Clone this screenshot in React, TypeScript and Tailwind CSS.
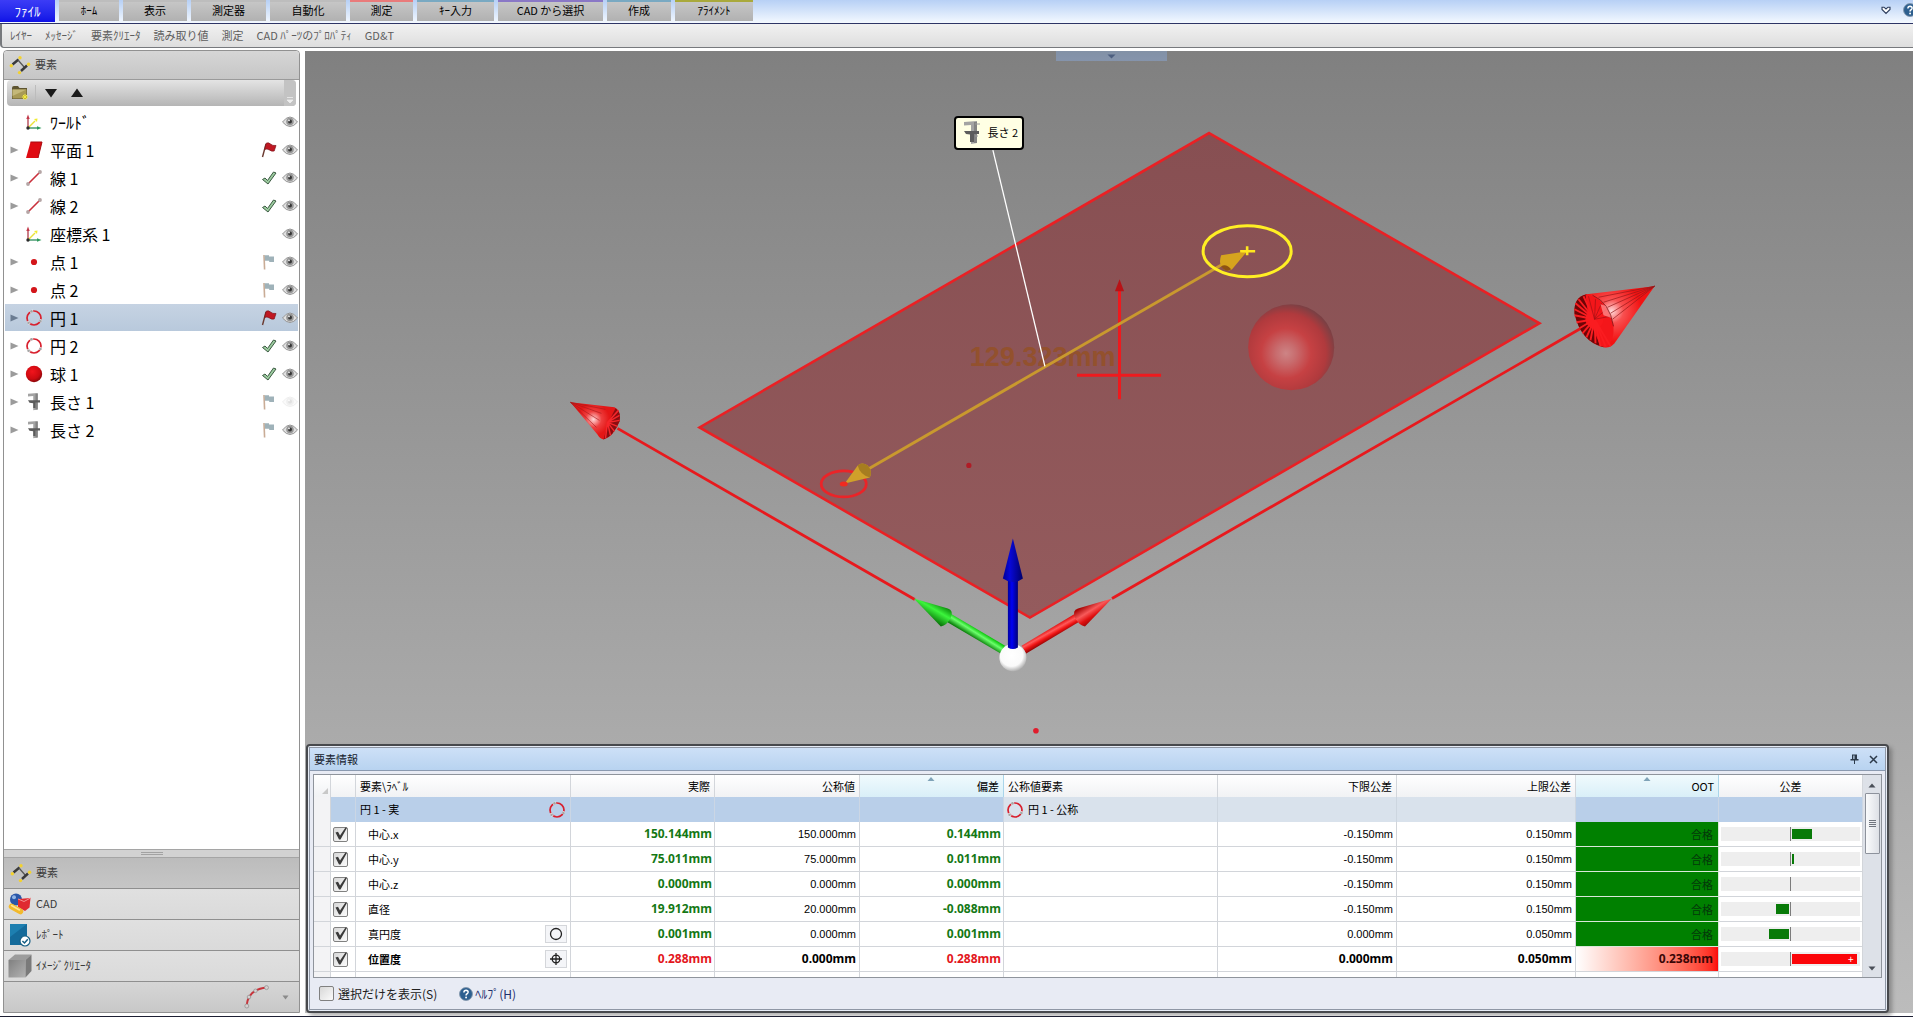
import React, { useState } from "react";

type Status = "none" | "redFlag" | "greyFlag" | "ok";
type Kind = "axes" | "plane" | "line" | "point" | "circle" | "sphere" | "caliper";

interface TreeItem {
  label: string;
  kind: Kind;
  status: Status;
  hidden?: boolean;
}

const TREE: TreeItem[] = [
  { label: "ﾜｰﾙﾄﾞ", kind: "axes", status: "none" },
  { label: "平面 1", kind: "plane", status: "redFlag" },
  { label: "線 1", kind: "line", status: "ok" },
  { label: "線 2", kind: "line", status: "ok" },
  { label: "座標系 1", kind: "axes", status: "none" },
  { label: "点 1", kind: "point", status: "greyFlag" },
  { label: "点 2", kind: "point", status: "greyFlag" },
  { label: "円 1", kind: "circle", status: "redFlag" },
  { label: "円 2", kind: "circle", status: "ok" },
  { label: "球 1", kind: "sphere", status: "ok" },
  { label: "長さ 1", kind: "caliper", status: "greyFlag", hidden: true },
  { label: "長さ 2", kind: "caliper", status: "greyFlag" },
];

const TABS = [
  { label: "ﾎｰﾑ", cls: "w-[60px] border-[#bdbdbd]" },
  { label: "表示", cls: "w-[64px] border-[#bdbdbd]" },
  { label: "測定器", cls: "w-[75px] border-[#bdbdbd]" },
  { label: "自動化", cls: "w-[76px] border-[#bdbdbd]" },
  { label: "測定", cls: "w-[63px] border-[#e97b7b]" },
  { label: "ｷｰ入力", cls: "w-[77px] border-[#79a9c2]" },
  { label: "CAD から選択", cls: "w-[105px] border-[#8a78c6]" },
  { label: "作成", cls: "w-[64px] border-[#79a9c2]" },
  { label: "ｱﾗｲﾒﾝﾄ", cls: "w-[78px] border-[#a9a93c]" },
];

const MENU = ["ﾚｲﾔｰ", "ﾒｯｾｰｼﾞ", "要素ｸﾘｴｰﾀ", "読み取り値", "測定", "CAD ﾊﾟｰﾂのﾌﾟﾛﾊﾟﾃｨ", "GD&T"];

interface Row {
  label: string;
  actual: string;
  nominal: string;
  dev: string;
  lower: string;
  upper: string;
  oot: string;
  bar: number;
  symbol?: "round" | "position";
  fail?: boolean;
}

const ROWS: Row[] = [
  { label: "中心.x", actual: "150.144mm", nominal: "150.000mm", dev: "0.144mm", lower: "-0.150mm", upper: "0.150mm", oot: "合格", bar: 30 },
  { label: "中心.y", actual: "75.011mm", nominal: "75.000mm", dev: "0.011mm", lower: "-0.150mm", upper: "0.150mm", oot: "合格", bar: 3 },
  { label: "中心.z", actual: "0.000mm", nominal: "0.000mm", dev: "0.000mm", lower: "-0.150mm", upper: "0.150mm", oot: "合格", bar: 0 },
  { label: "直径", actual: "19.912mm", nominal: "20.000mm", dev: "-0.088mm", lower: "-0.150mm", upper: "0.150mm", oot: "合格", bar: -19 },
  { label: "真円度", actual: "0.001mm", nominal: "0.000mm", dev: "0.001mm", lower: "0.000mm", upper: "0.050mm", oot: "合格", bar: -30, symbol: "round" },
  { label: "位置度", actual: "0.288mm", nominal: "0.000mm", dev: "0.288mm", lower: "0.000mm", upper: "0.050mm", oot: "0.238mm", bar: 95, symbol: "position", fail: true },
];

function CircleIcon() {
  return (
    <svg width="18" height="18" viewBox="0 0 18 18" fill="none" className="shrink-0">
      <circle cx="9" cy="9" r="7" stroke="#d8202e" strokeWidth="1.7" />
      <path d="M5 2.800 L8 1.600 M14.800 13 L16.200 10.500 M2.600 12.200 L4.800 15" stroke="#f4f4f4" strokeWidth="2.400" />
      <circle cx="6.500" cy="2.300" r="1.300" fill="#a4a4a4" />
      <circle cx="15.400" cy="12" r="1.300" fill="#a4a4a4" />
      <circle cx="3.600" cy="13.800" r="1.300" fill="#a4a4a4" />
    </svg>
  );
}

function CaliperIcon() {
  return (
    <svg width="20" height="24" viewBox="0 0 20 24">
      <path d="M2 1 L15 0 V22 L9 23 V4 L2 4.5Z" fill="#a3a3a3" />
      <path d="M12 1 H15 V22 H12Z" fill="#838383" />
      <path d="M2 10 H17 V13 H12 V21 H8 V13.5 L4 13Z" fill="#5c5c5c" />
      <path d="M13 3 H18 M13 15 H16" stroke="#9a9a9a" strokeWidth="1" />
    </svg>
  );
}

function KindIcon({ kind }: { kind: Kind }) {
  switch (kind) {
    case "axes":
      return (
        <svg width="18" height="18" viewBox="0 0 18 18" fill="none">
          <path d="M4 14 L10 8" stroke="#e9e23a" strokeWidth="1.500" />
          <path d="M12.500 5.500 L12 9 L9 6Z" fill="#f0ec30" />
          <path d="M3 14 V4" stroke="#b03a48" strokeWidth="1.300" />
          <path d="M3 1.500 L4.700 6 H1.300Z" fill="#c23a4a" />
          <path d="M3 15 H12" stroke="#2c8a5a" strokeWidth="1.300" />
          <path d="M16.500 15 L12 13.300 V16.700Z" fill="#2c9a5a" />
          <circle cx="3" cy="15" r="1.700" fill="#2b2b2b" />
        </svg>
      );
    case "plane":
      return (
        <svg width="18" height="18" viewBox="0 0 18 18">
          <path d="M5.5 1 H17 L13 17 H1Z" fill="#df0b12" />
          <path d="M5.5 1 H17 L13 17" fill="none" stroke="#a80a0e" strokeWidth="1" />
        </svg>
      );
    case "line":
      return (
        <svg width="18" height="18" viewBox="0 0 18 18">
          <path d="M3.5 14.5 L14.5 3.5" stroke="#c9303b" strokeWidth="1.6" />
          <circle cx="3" cy="15" r="1.9" fill="#b5a5a5" />
          <circle cx="15" cy="3" r="1.9" fill="#b5a5a5" />
        </svg>
      );
    case "point":
      return (
        <svg width="18" height="18" viewBox="0 0 18 18">
          <circle cx="9" cy="9" r="3.1" fill="#d3161b" />
        </svg>
      );
    case "circle":
      return <CircleIcon />;
    case "sphere":
      return (
        <svg width="18" height="18" viewBox="0 0 18 18">
          <defs>
            <radialGradient id="ballSmall" cx="0.4" cy="0.35" r="0.65">
              <stop offset="0" stopColor="#f2141c" />
              <stop offset="0.7" stopColor="#cc0a10" />
              <stop offset="1" stopColor="#8d070b" />
            </radialGradient>
          </defs>
          <circle cx="9" cy="9" r="8.2" fill="url(#ballSmall)" />
        </svg>
      );
    default:
      return (
        <svg width="18" height="18" viewBox="0 0 20 24">
          <path d="M2 1 L15 0 V22 L9 23 V4 L2 4.5Z" fill="#a3a3a3" />
          <path d="M12 1 H15 V22 H12Z" fill="#838383" />
          <path d="M2 9.500 H18 V12.500 H12 V20 H9 V13.500 L4 13Z" fill="#5c5c5c" />
        </svg>
      );
  }
}

function StatusIcon({ status }: { status: Status }) {
  if (status === "none") return <span className="w-[16px]" />;
  if (status === "ok")
    return (
      <svg width="16" height="16" viewBox="0 0 16 16">
        <path d="M1.5 9.5 L4 8 L6.5 10.5 L12.5 2 L15 3 L7 14Z" fill="#9ccb9f" stroke="#3b5a42" strokeWidth="1" strokeLinejoin="round" />
      </svg>
    );
  if (status === "redFlag")
    return (
      <svg width="16" height="16" viewBox="0 0 16 16">
        <path d="M5 2 L1.5 15" stroke="#6b3a30" strokeWidth="1.4" />
        <path d="M5.2 1.2 Q7.5 0.2 9.5 2 Q11.5 4 15 3.5 L13.2 9 Q10.5 9.6 8.3 7.9 Q6 6.4 3.7 7.4Z" fill="#c01822" stroke="#7d141b" strokeWidth="0.7" />
      </svg>
    );
  return (
    <svg width="16" height="16" viewBox="0 0 16 16">
      <path d="M3 1 L3.6 15.5" stroke="#c9ac96" strokeWidth="1.6" />
      <path d="M3.6 1.2 H8 V2.6 H13 V8 H8.2 V6.8 H4Z" fill="#9fb2b9" />
    </svg>
  );
}

function EyeIcon({ faded }: { faded?: boolean }) {
  return (
    <svg width="16" height="12" viewBox="0 0 16 12" className={faded ? "opacity-15" : ""}>
      <path d="M0.5 6 Q8 -4 15.5 6 Q8 15 0.5 6Z" fill="#e0e0e0" stroke="#8c8c8c" strokeWidth="0.9" />
      <circle cx="8" cy="5.6" r="3.8" fill="#969696" />
      <circle cx="8" cy="5.6" r="2" fill="#363636" />
      <circle cx="7" cy="4.4" r="0.9" fill="#f3f3f3" />
    </svg>
  );
}

function FeatureIcon() {
  return (
    <svg width="22" height="20" viewBox="0 0 22 20" className="shrink-0">
      <path d="M3.500 9.500 L9.500 4.500" stroke="#3a3a3a" strokeWidth="2.4" />
      <path d="M9 5 L15.500 12.500" stroke="#555" strokeWidth="1.2" />
      <path d="M12 16 L18 10.500" stroke="#3a3a3a" strokeWidth="2.4" />
      <circle cx="11" cy="2.800" r="1.700" fill="#f3d22e" />
      <circle cx="2.300" cy="10.800" r="1.700" fill="#f3d22e" />
      <circle cx="19.600" cy="9.200" r="1.700" fill="#f3d22e" />
      <circle cx="10.500" cy="17.600" r="1.700" fill="#f3d22e" />
    </svg>
  );
}

function CadIcon() {
  return (
    <svg width="24" height="22" viewBox="0 0 24 22">
      <circle cx="8" cy="6.5" r="6" fill="#2a56a8" />
      <circle cx="6" cy="4.3" r="2" fill="#8fb4e6" />
      <path d="M10 6 L22.5 5 L21.5 14.5 L17 18 L10 14Z" fill="#e02a30" />
      <path d="M10 6 L16 8.5 L22.5 5" fill="none" stroke="#f49090" strokeWidth="1" />
      <path d="M3.500 13.500 L12.500 18.500" stroke="#f2b92c" strokeWidth="5.5" strokeLinecap="round" />
      <path d="M3.500 12.500 L11.500 17" stroke="#ffe590" strokeWidth="1.5" strokeLinecap="round" />
    </svg>
  );
}

function ReportIcon() {
  return (
    <svg width="24" height="24" viewBox="0 0 24 24">
      <path d="M2 1 H19 V22 H2Z" fill="#146a9a" />
      <path d="M2 1 H19 L2 14Z" fill="#1d7fb0" />
      <circle cx="17" cy="18" r="5" fill="#fff" stroke="#175f85" strokeWidth="1.2" />
      <path d="M14.4 18 L16.5 20 L19.8 16.2" fill="none" stroke="#175f85" strokeWidth="1.5" />
    </svg>
  );
}

function CubeIcon() {
  return (
    <svg width="24" height="24" viewBox="0 0 24 24">
      <defs>
        <linearGradient id="cubeFace" x1="0" y1="0" x2="1" y2="1">
          <stop offset="0" stopColor="#808080" />
          <stop offset="1" stopColor="#b2b2b2" />
        </linearGradient>
      </defs>
      <path d="M0.500 6 H17.500 V23.500 H0.500Z" fill="url(#cubeFace)" />
      <path d="M0.5 6 L7 0.5 H23.5 L17.5 6Z" fill="#9c9c9c" />
      <path d="M17.5 6 L23.5 0.5 V17 L17.500 23.5Z" fill="#7a7a7a" />
    </svg>
  );
}

function HelpIcon() {
  return (
    <svg width="14" height="14" viewBox="0 0 16 16" className="shrink-0">
      <circle cx="8" cy="8" r="7.4" fill="#2d5f8f" stroke="#8397ab" strokeWidth="1" />
      <path d="M5.6 6.2 Q5.7 3.8 8.1 3.8 Q10.5 3.9 10.4 6 Q10.3 7.3 8.9 8 Q8.1 8.5 8.1 9.6" fill="none" stroke="#fff" strokeWidth="1.7" />
      <circle cx="8.1" cy="12" r="1.1" fill="#fff" />
    </svg>
  );
}

function Ribbon() {
  return (
    <header className="shrink-0">
      <div className="flex h-[23px] items-start bg-linear-to-b from-[#b7d0f5] to-[#f4f9ff]">
        <nav className="flex gap-1">
          <button className="h-[22px] w-[55px] bg-linear-to-b from-[#3c3cf6] to-[#1010e6] text-[13px] leading-5 text-white">ﾌｧｲﾙ</button>
          {TABS.map((t) => (
            <button key={t.label} className={`h-[21px] border-t-2 bg-linear-to-b from-[#c6c6c6] to-[#b1b1b1] pb-1 text-[11px] leading-4 text-black ${t.cls}`}>
              {t.label}
            </button>
          ))}
        </nav>
        <div className="ml-auto flex items-center gap-3 overflow-hidden pt-[3px]">
          <button aria-label="折りたたむ">
            <svg width="10" height="9" viewBox="0 0 10 9" className="block">
              <path d="M1 1.2 H3 L5 3 L7 1.2 H9 V3.4 L5 7.4 L1 3.4Z" fill="#fff" stroke="#2c3c5c" strokeWidth="1.1" />
            </svg>
          </button>
          <button aria-label="ヘルプ" className="-mr-1">
            <HelpIcon />
          </button>
        </div>
      </div>
      <div className="h-px bg-[#2e3566]" />
      <div className="flex h-[24px] items-center gap-[13px] rounded-bl border-b border-l-2 border-[#77797d] bg-linear-to-b from-[#f1f1f1] to-[#dedede] pb-px pl-2 text-[11px] text-[#5d5d5d]">
        {MENU.map((m) => (
          <button key={m} className="leading-4 whitespace-nowrap">
            {m}
          </button>
        ))}
      </div>
    </header>
  );
}

function Sidebar() {
  const [selected, setSelected] = useState(7);
  const navItem = "flex h-[31px] w-full items-center gap-1 border-t border-[#8f8f8f] bg-linear-to-b from-[#e0e0e0] to-[#dadada] pb-px pl-[4px]";
  return (
    <aside className="flex w-[297px] shrink-0 flex-col rounded-t border border-[#919191] bg-white">
      <div className="flex h-[29px] shrink-0 items-center gap-1 rounded-t border-b border-[#9a9a9a] bg-linear-to-b from-[#d6d6d6] to-[#c6c6c6] pb-px pl-[5px] text-[11px] text-[#3c3c3c]">
        <FeatureIcon />
        要素
      </div>
      <div className="mx-[3px] flex h-[26px] shrink-0 items-center rounded bg-linear-to-b from-[#e4e4e4] to-[#b5b5b5] pl-1">
        <button aria-label="新しいフォルダ" className="border-r border-[#bcbcbc] pr-1.5">
          <svg width="18" height="16" viewBox="0 0 18 16" className="block">
            <path d="M1 3 Q1 1 3 1 H7 L8.5 3 H16 V14 H1Z" fill="#5e5430" />
            <path d="M1.5 4.500 H15.5 V13.5 H1.5Z" fill="#a89a55" />
            <path d="M1.5 4.500 H15.5 L1.5 11Z" fill="#c4b878" />
            <path d="M14 9 V15 M11 12 H17 M12 10 L16 14 M16 10 L12 14" stroke="#f5ec3a" strokeWidth="1" />
          </svg>
        </button>
        <button aria-label="下へ" className="ml-2">
          <svg width="14" height="10" viewBox="0 0 14 10"><path d="M1 1 H13 L7 9.5Z" fill="#1a1a1a" /></svg>
        </button>
        <button aria-label="上へ" className="ml-3">
          <svg width="14" height="10" viewBox="0 0 14 10"><path d="M1 9 H13 L7 0.5Z" fill="#1a1a1a" /></svg>
        </button>
        <span className="ml-auto flex h-full w-3 items-end justify-center rounded-r bg-[#c3c3c3] pb-0.5">
          <svg width="8" height="8" viewBox="0 0 8 8"><path d="M1 1.5 H7 M1 4 H7 L4 7Z" fill="#eee" stroke="#eee" strokeWidth="0.8" /></svg>
        </span>
      </div>
      <ul className="mt-[2px] min-h-0 flex-1 overflow-hidden px-px">
        {TREE.map((t, i) => (
          <li key={t.label} className="h-[28px]">
            <button
              onClick={() => setSelected(i)}
              className={`flex h-[27px] w-full items-center text-left ${i === selected ? "bg-linear-to-b from-[#c6d3e3] to-[#b8c9dc]" : ""}`}
            >
              <span className="flex w-[19px] justify-center">
                {t.kind !== "axes" && (
                  <svg width="9" height="8" viewBox="0 0 9 8"><path d="M0.5 0.5 L8.5 4 L0.5 7.5Z" fill={i === selected ? "#6b7c92" : "#9b9b9b"} /></svg>
                )}
              </span>
              <span className="flex w-[20px] justify-center"><KindIcon kind={t.kind} /></span>
              <span className="ml-1.5 text-[16px] leading-6 text-black">{t.label}</span>
              <span className="ml-auto flex items-center gap-[5px]">
                <StatusIcon status={t.status} />
                <EyeIcon faded={t.hidden} />
              </span>
            </button>
          </li>
        ))}
      </ul>
      <div className="flex h-2 shrink-0 items-center justify-center border-t border-[#a5a5a5] bg-[#d2d2d2]">
        <span className="h-[3px] w-[22px] border-y border-[#a2a2a2]" />
      </div>
      <nav className="shrink-0 text-[11px] text-[#3a3a3a]">
        <button className="flex h-[31px] w-full items-center gap-1 border-t border-[#a5a5a5] bg-linear-to-b from-[#bcbcbc] to-[#c6c6c6] pb-px pl-[6px]"><FeatureIcon />要素</button>
        <button className={navItem}><CadIcon />CAD</button>
        <button className={navItem}><ReportIcon />ﾚﾎﾟｰﾄ</button>
        <button className={navItem}><CubeIcon />ｲﾒｰｼﾞｸﾘｴｰﾀ</button>
        <div className="flex h-[31px] items-center justify-end gap-3 border-t border-[#8f8f8f] bg-linear-to-b from-[#d6d6d6] to-[#c8c8c8] pr-[10px]">
          <button aria-label="曲線">
            <svg width="26" height="24" viewBox="0 0 26 24" className="block" fill="none">
              <path d="M2.5 21 Q4 4 23 2.5" stroke="#c8323a" strokeWidth="2" />
              <g fill="#d4d0d0" stroke="#8f8f8f" strokeWidth="0.7">
                <circle cx="2.8" cy="21" r="2" /><circle cx="5" cy="12" r="1.8" /><circle cx="11.5" cy="5.8" r="1.8" /><circle cx="22.5" cy="2.6" r="2" />
              </g>
            </svg>
          </button>
          <button aria-label="その他">
            <svg width="7" height="5" viewBox="0 0 7 5" className="block"><path d="M0.5 0.5 H6.5 L3.5 4.5Z" fill="#8a8a8a" /></svg>
          </button>
        </div>
      </nav>
    </aside>
  );
}

function fan(cx: number, cy: number, pts: number[][]) {
  return pts.map(([x, y]) => `M${cx} ${cy} L${x} ${y}`).join(" ");
}

const RIGHT_RIM = [
  [1583, 296], [1578, 299], [1575, 303], [1574, 309], [1574, 315], [1576, 322], [1579, 328], [1582, 333], [1586, 337],
  [1590, 340], [1595, 343], [1600, 346], [1605, 346], [1610, 346],
];
const RIGHT_FRONT = [[1588, 296], [1595, 299], [1601, 303], [1606, 309], [1610, 316]];
const LEFT_RIM = [[619, 410], [620, 415], [620, 420], [618, 426], [615, 431], [611, 435], [606, 438]];

function Scene() {
  return (
    <svg className="absolute inset-0 h-full w-full" viewBox="305 51 1608 961" preserveAspectRatio="xMidYMid slice">
      <defs>
        <linearGradient id="planeFill" x1="0" y1="0" x2="0" y2="1">
          <stop offset="0" stopColor="#874f52" />
          <stop offset="1" stopColor="#945b5d" />
        </linearGradient>
        <radialGradient id="ball" cx="0.44" cy="0.57" r="0.58">
          <stop offset="0" stopColor="#cd8485" />
          <stop offset="0.2" stopColor="#c86c6e" />
          <stop offset="0.5" stopColor="#c64143" />
          <stop offset="0.8" stopColor="#b03a3d" />
          <stop offset="1" stopColor="#7c4044" />
        </radialGradient>
        <radialGradient id="white" cx="0.45" cy="0.4" r="0.6">
          <stop offset="0" stopColor="#fff" />
          <stop offset="0.7" stopColor="#fafafa" />
          <stop offset="1" stopColor="#b4b4b4" />
        </radialGradient>
        <linearGradient id="blue" x1="0" x2="1">
          <stop offset="0" stopColor="#0000a0" />
          <stop offset="0.4" stopColor="#0202f4" />
          <stop offset="1" stopColor="#000078" />
        </linearGradient>
        <linearGradient id="blueCone" x1="0" x2="1">
          <stop offset="0" stopColor="#000096" />
          <stop offset="0.35" stopColor="#0808d8" />
          <stop offset="1" stopColor="#00006a" />
        </linearGradient>
        <linearGradient id="green" gradientUnits="userSpaceOnUse" x1="978" y1="629" x2="973" y2="637">
          <stop offset="0" stopColor="#10c810" />
          <stop offset="0.4" stopColor="#6cff6c" />
          <stop offset="1" stopColor="#067a06" />
        </linearGradient>
        <linearGradient id="greenCone" gradientUnits="userSpaceOnUse" x1="942" y1="604" x2="932" y2="621">
          <stop offset="0" stopColor="#0a8c0a" />
          <stop offset="0.4" stopColor="#3cf53c" />
          <stop offset="1" stopColor="#056805" />
        </linearGradient>
        <linearGradient id="red" gradientUnits="userSpaceOnUse" x1="1049" y1="628" x2="1054" y2="637">
          <stop offset="0" stopColor="#e01010" />
          <stop offset="0.35" stopColor="#ff5a5a" />
          <stop offset="0.65" stopColor="#f01414" />
          <stop offset="1" stopColor="#980404" />
        </linearGradient>
        <linearGradient id="redCone" gradientUnits="userSpaceOnUse" x1="1086" y1="604" x2="1096" y2="620">
          <stop offset="0" stopColor="#a80606" />
          <stop offset="0.4" stopColor="#f85a5a" />
          <stop offset="0.7" stopColor="#e01010" />
          <stop offset="1" stopColor="#980606" />
        </linearGradient>
        <radialGradient id="bigCone" gradientUnits="userSpaceOnUse" cx="1611" cy="311" r="30">
          <stop offset="0" stopColor="#ffdcdc" />
          <stop offset="0.4" stopColor="#f85050" />
          <stop offset="1" stopColor="#f21212" />
        </radialGradient>
        <radialGradient id="leftCone" gradientUnits="userSpaceOnUse" cx="594" cy="419" r="16">
          <stop offset="0" stopColor="#ffd8d8" />
          <stop offset="0.5" stopColor="#ee3f3f" />
          <stop offset="1" stopColor="#e41616" />
        </radialGradient>
      </defs>

      <polygon points="1209,133 1539,323 1030,617 700,427" fill="url(#planeFill)" stroke="#ea2024" strokeWidth="2.6" />

      <text x="970" y="366" fontFamily="Liberation Sans" fontWeight="bold" fontSize="27" fill="#955020" opacity="0.75">129.323mm</text>

      <path d="M618 428 L915 599 M1112 598 L1584 326" stroke="#e8191d" strokeWidth="2.8" />

      <path d="M571 402 L615 407 Q622 410 620 421 Q614 436 604 439 Q600 438 598 434Z" fill="url(#leftCone)" />
      <path d="M616 408 Q622 412 620 421 Q614 436 604 439 L609 422Z" fill="#8c0c10" />
      <path d={fan(608, 422, LEFT_RIM)} stroke="#f5262a" strokeWidth="1.5" />
      <path d="M571 402 L602 413 M571 402 L600 420 M571 402 L597 427 M571 402 L606 409" stroke="#a41a1a" strokeWidth="0.6" />

      <path d="M1654 286 L1586 294 Q1573 297 1574 313 Q1580 341 1603 347 Q1610 348 1614 343Z" fill="url(#bigCone)" />
      <path d="M1586 294 Q1573 297 1574 313 Q1580 341 1603 347 L1594 319Z" fill="#6e0507" />
      <path d="M1585 294 Q1606 296 1613 326 Q1614 340 1606 347 L1600 346 L1588 318Z" fill="#f4161a" />
      <circle cx="1594" cy="319" r="9" fill="#f8181c" />
      <path d={fan(1594, 319, RIGHT_RIM)} stroke="#fa1c20" strokeWidth="1.9" />
      <path d={fan(1594, 319, RIGHT_FRONT)} stroke="#a01014" strokeWidth="0.7" />
      <path d="M1600 304 L1607 306 L1612 318 L1603 315Z" fill="#ff9a9a" opacity="0.7" />
      <path d="M1654 286 L1598 297 M1654 286 L1603 302 M1654 286 L1607 307 M1654 286 L1610 313 M1654 286 L1612 319" stroke="#96181a" strokeWidth="0.7" />
      <path d="M1592 295 Q1609 302 1613 326" fill="none" stroke="#7e1416" strokeWidth="0.8" />

      <circle cx="1291" cy="347" r="43" fill="url(#ball)" />

      <path d="M1119.500 290 V399 M1077 375 H1161" stroke="#ee1a1e" strokeWidth="3" />
      <path d="M1119.500 279 L1124 291 H1115Z" fill="#b81216" />

      <path d="M866 470 L1226 262" stroke="#c9992e" strokeWidth="3" />
      <ellipse cx="844" cy="483.500" rx="22.500" ry="13" fill="none" stroke="#ea2428" strokeWidth="2.8" />
      <path d="M845 483 L858 465 Q862 461 868 465 Q873 471 870 477Z" fill="#d0a02a" />
      <path d="M858 465 Q862 461 868 465 Q873 471 870 477 Q860 474 858 465Z" fill="#a67d20" />
      <ellipse cx="844" cy="483.500" rx="4" ry="2.500" fill="#f02a20" />
      <path d="M1247 251 L1221 255 Q1218 264 1223 268 Q1227 272 1232 269Z" fill="#d6a41e" />
      <path d="M1221 266 Q1226 263 1231 269 Q1226 273 1221 266Z" fill="#8e5212" />
      <ellipse cx="1247" cy="251" rx="44" ry="25.500" fill="none" stroke="#ffef24" strokeWidth="3" />
      <path d="M1240 251 H1255 M1247 246 V255" stroke="#ffe81e" strokeWidth="2.600" />

      <circle cx="969" cy="465" r="2.600" fill="#b01c26" />
      <circle cx="1036" cy="730" r="2.800" fill="#e01c2c" />

      <path d="M993 150 L1045 366" stroke="#fff" strokeWidth="1.300" />

      <path d="M1003 649 L947 616" stroke="url(#green)" strokeWidth="9" />
      <path d="M914 598 L948 608 Q954 610 951 617 Q947 625 941 626Z" fill="url(#greenCone)" />
      <path d="M1024 649 L1079 616" stroke="url(#red)" strokeWidth="9" />
      <path d="M1112 598 L1078 608 Q1072 610 1075 617 Q1079 625 1085 626Z" fill="url(#redCone)" />
      <circle cx="1013" cy="657" r="13.500" fill="url(#white)" />
      <path d="M1008 578 H1018 V647 Q1013 650 1008 647Z" fill="url(#blue)" />
      <path d="M1013 538 L1023 578 Q1013 585 1003 578Z" fill="url(#blueCone)" />
    </svg>
  );
}

function TickBox({ label, checked, onChange }: { label: string; checked: boolean; onChange: () => void }) {
  return (
    <span className="relative inline-block size-[15px] align-middle">
      <input
        type="checkbox"
        aria-label={label}
        checked={checked}
        onChange={onChange}
        className="block size-[15px] appearance-none rounded-[2px] border border-[#808080] bg-linear-to-br from-[#d8d8d8] to-[#fbfbfb]"
      />
      {checked && (
        <svg viewBox="0 0 15 15" className="pointer-events-none absolute inset-0 size-[15px]">
          <path d="M2.500 5.500 L5 4.800 L7 8.500 L12.500 0.500 L14 0.800 L7.500 12.500 H6Z" fill="#3a3a3a" />
        </svg>
      )}
    </span>
  );
}

function ToleranceBar({ value, fail }: { value: number; fail?: boolean }) {
  const fill = fail ? "bg-[#fb0509]" : "bg-[#087a08]";
  return (
    <div className="mx-[2px] flex h-[14px] items-center bg-[#eeeeee]">
      <div className="flex flex-1 justify-end pr-px">
        {value < 0 && <div className={`h-[10px] ${fill}`} style={{ width: `${-value}%` }} />}
      </div>
      <div className="h-[14px] w-px bg-[#7c7c7c]" />
      <div className="flex flex-1 pl-px">
        {value > 0 && (
          <div className={`flex h-[10px] items-center justify-end ${fill}`} style={{ width: `${value}%` }}>
            {fail && <span className="pr-[3px] text-[10px] leading-[10px] text-white">+</span>}
          </div>
        )}
      </div>
    </div>
  );
}

function SymbolBox({ symbol }: { symbol: "round" | "position" }) {
  return (
    <span className="flex h-[18px] w-[22px] items-center justify-center border border-[#d4d6da] bg-[#f4f5f8]">
      <svg width="14" height="14" viewBox="0 0 14 14" fill="none" stroke="#222" strokeWidth="1.300">
        {symbol === "round" ? <circle cx="7" cy="7" r="5.500" /> : <path d="M7 1 V13 M1 7 H13 M7 3.200 A3.800 3.800 0 1 0 7 10.800 A3.800 3.800 0 1 0 7 3.200" />}
      </svg>
    </span>
  );
}

function InfoPanel() {
  const [checks, setChecks] = useState(ROWS.map(() => true));
  const [only, setOnly] = useState(false);
  const th = "relative border-r border-[#d3d6db] bg-linear-to-b from-white to-[#f1f2f4] px-1 font-normal";
  const hot = "relative border-r border-[#a9d5ea] bg-linear-to-b from-[#f0fafd] to-[#d9eff8] px-1 text-right font-normal";
  const cell = "border-r border-b border-[#d2d5da]";
  const sel = "border-r border-[#cbd6e4] bg-[#b9cfe9]";
  const selLight = "border-r border-[#cdd6e0] bg-[#d9e2ec]";
  const arrow = (
    <svg width="8" height="4" viewBox="0 0 8 4" className="absolute top-[2px] left-[67px]"><path d="M0.500 4 L4 0 L7.500 4Z" fill="#7fa3b8" /></svg>
  );
  return (
    <section className="rounded border-2 border-[#47494d] bg-[#e6ecf6] p-px shadow-[3px_3px_4px_rgba(60,60,60,0.4)]">
      <div className="border border-[#8f97a5] bg-[#e8ebf4]">
        <div className="flex h-[23px] items-center border-b border-[#8b9ab0] bg-linear-to-b from-[#cde0f7] to-[#b8d3f0] px-1 text-[11px] text-[#14202c]">
          <h2>要素情報</h2>
          <div className="ml-auto flex items-center gap-[10px] pr-[3px]">
            <button aria-label="ピン留め">
              <svg width="9" height="10" viewBox="0 0 9 10" className="block"><path d="M2 0.500 H7 V5 H8.500 V6.500 H5 V10 H4 V6.500 H0.500 V5 H2Z" fill="#2c3a4a" /><path d="M3.300 1.500 H4.500 V5 H3.300Z" fill="#c4daf2" /></svg>
            </button>
            <button aria-label="閉じる">
              <svg width="9" height="9" viewBox="0 0 9 9" className="block"><path d="M1 1 L8 8 M8 1 L1 8" stroke="#2c3a4a" strokeWidth="1.500" /></svg>
            </button>
          </div>
        </div>
        <div className="mx-[3px] mt-[3px] flex h-[204px] overflow-hidden border border-[#8f949c] bg-white">
          <div className="h-full min-w-0 flex-1 overflow-hidden">
            <table className="w-full table-fixed border-separate border-spacing-0 text-[11px] text-black">
              <colgroup>
                <col className="w-[17px]" /><col className="w-[25px]" /><col className="w-[215px]" /><col className="w-[144px]" />
                <col className="w-[145px]" /><col className="w-[144px]" /><col /><col className="w-[179px]" />
                <col className="w-[179px]" /><col className="w-[143px]" /><col className="w-[144px]" />
              </colgroup>
              <thead>
                <tr className="h-[22px]">
                  <th className={th}>
                    <svg width="6" height="6" viewBox="0 0 6 6" className="absolute right-[2px] bottom-[3px]"><path d="M6 0 V6 H0Z" fill="#c8c8c8" /></svg>
                  </th>
                  <th className={th} />
                  <th className={`${th} text-left`}>要素\ﾗﾍﾞﾙ</th>
                  <th className={`${th} text-right`}>実際</th>
                  <th className={`${th} text-right`}>公称値</th>
                  <th className={hot}>{arrow}偏差</th>
                  <th className={`${th} text-left`}>公称値要素</th>
                  <th className={`${th} text-right`}>下限公差</th>
                  <th className={`${th} text-right`}>上限公差</th>
                  <th className={hot}>{arrow}OOT</th>
                  <th className={`${th} text-center`}>公差</th>
                </tr>
              </thead>
              <tbody>
                <tr className="h-[25px]">
                  <td className="border-r border-[#d2d5da] bg-[#f3f3f5]" />
                  <td className={sel} />
                  <td className={`${sel} pr-1 pl-1`}>
                    <span className="flex items-center justify-between">円 1 - 実<CircleIcon /></span>
                  </td>
                  <td className={sel} /><td className={sel} /><td className={sel} />
                  <td className={`${selLight} pl-[2px]`}>
                    <span className="flex items-center gap-1"><CircleIcon />円 1 - 公称</span>
                  </td>
                  <td className={selLight} /><td className={selLight} /><td className={sel} /><td className={sel} />
                </tr>
                {ROWS.map((r, i) => {
                  const num = r.fail ? "font-['Noto_Sans'] text-[12px] font-bold" : "font-['Liberation_Sans']";
                  const strong = `${cell} px-[2px] text-right font-['Noto_Sans'] text-[12px] font-bold ${r.fail ? "text-[#e3161c]" : "text-[#147814]"}`;
                  return (
                    <tr key={r.label} className="h-[25px] leading-4">
                      <td className={`${cell} bg-[#f3f3f5]`} />
                      <td className={`${cell} pr-[5px] text-center leading-none`}>
                        <TickBox label={r.label} checked={checks[i]} onChange={() => setChecks(checks.map((c, k) => (k === i ? !c : c)))} />
                      </td>
                      <td className={`${cell} pr-[3px] pl-3 ${r.fail ? "font-bold" : ""}`}>
                        <span className="flex items-center justify-between">{r.label}{r.symbol && <SymbolBox symbol={r.symbol} />}</span>
                      </td>
                      <td className={strong}>{r.actual}</td>
                      <td className={`${cell} px-[3px] text-right ${num}`}>{r.nominal}</td>
                      <td className={strong}>{r.dev}</td>
                      <td className={cell} />
                      <td className={`${cell} px-[3px] text-right ${num}`}>{r.lower}</td>
                      <td className={`${cell} px-[3px] text-right ${num}`}>{r.upper}</td>
                      <td className={r.fail ? "border-r border-b border-[#d2d5da] bg-linear-to-r from-white to-[#fb0509] px-[5px] text-right font-['Noto_Sans'] text-[12px] font-bold text-[#3a0606]" : "border-r border-b border-[#d8e8d8] bg-[#008000] px-[5px] text-right text-[#04380a]"}>{r.oot}</td>
                      <td className={`${cell} leading-none`}><ToleranceBar value={r.bar} fail={r.fail} /></td>
                    </tr>
                  );
                })}
                <tr className="h-[25px]">
                  <td className={`${cell} bg-[#f3f3f5]`} />
                  {[0, 1, 2, 3, 4, 5, 6, 7, 8, 9].map((k) => <td key={k} className={cell} />)}
                </tr>
              </tbody>
            </table>
          </div>
          <div className="flex w-[18px] shrink-0 flex-col items-center bg-[#dde1e8] pt-2 pb-1.5">
            <button aria-label="上にスクロール"><svg width="8" height="5" viewBox="0 0 8 5" className="block"><path d="M0.500 4.500 L4 0.500 L7.500 4.500Z" fill="#4a4f58" /></svg></button>
            <div className="mt-[5px] flex h-[61px] w-[15px] flex-col items-center justify-center gap-px rounded-[1px] border border-[#8d929c] bg-linear-to-r from-[#fafbfc] to-[#dde0e6]">
              <span className="h-px w-[7px] bg-[#70757e]" /><span className="h-px w-[7px] bg-[#70757e]" /><span className="h-px w-[7px] bg-[#70757e]" /><span className="h-px w-[7px] bg-[#70757e]" />
            </div>
            <button aria-label="下にスクロール" className="mt-auto"><svg width="8" height="5" viewBox="0 0 8 5" className="block"><path d="M0.500 0.500 H7.500 L4 4.500Z" fill="#4a4f58" /></svg></button>
          </div>
        </div>
        <div className="flex h-[31px] items-center pl-[9px] text-[12px] text-[#202020]">
          <label className="flex items-center gap-1">
            <TickBox label="選択だけを表示(S)" checked={only} onChange={() => setOnly(!only)} />
            選択だけを表示(S)
          </label>
          <a href="#help" className="ml-[22px] flex items-center gap-[2px] text-[#1e2f6c]"><HelpIcon />ﾍﾙﾌﾟ(H)</a>
        </div>
      </div>
    </section>
  );
}

export default function App() {
  return (
    <div className="flex h-screen flex-col overflow-hidden border-b border-[#1d1f33] bg-white font-['Noto_Sans_CJK_JP',sans-serif]">
      <Ribbon />
      <div className="flex min-h-0 flex-1 gap-[5px] pt-[2px] pb-[3px] pl-[3px]">
        <Sidebar />
        <main className="relative mt-px flex min-w-0 flex-1 flex-col justify-between bg-linear-to-b from-[#808080] to-[#bcbcbc]">
          <Scene />
          <button aria-label="ツールバーを開く" className="relative ml-1 flex h-[10px] w-[111px] items-center justify-center self-center bg-linear-to-b from-[#8291a6] to-[#8594ac]">
            <svg width="9" height="5" viewBox="0 0 9 5"><path d="M0.500 0.500 H8.500 L4.500 4.500Z" fill="#4d5f80" /></svg>
          </button>
          <div className="absolute top-[65px] left-[649px] flex h-[34px] w-[70px] items-center justify-between rounded-[4px] border-2 border-black bg-[#ffffe4] pr-1 pb-px pl-1.5 text-[11px] text-black">
            <CaliperIcon />
            長さ 2
          </div>
          <div className="relative mr-[24px] ml-px">
            <InfoPanel />
          </div>
        </main>
      </div>
    </div>
  );
}
